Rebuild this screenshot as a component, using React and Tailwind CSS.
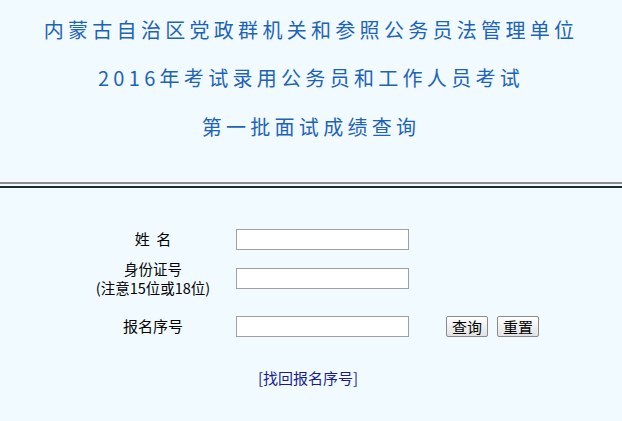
import React from 'react';

const cjk = { fontFamily: '"Noto Sans CJK SC", "Noto Sans", sans-serif' };

const App = () => {
  return (
    <div className="min-h-[421px] w-[622px] bg-[#f0faff]" style={cjk}>
      {/* Header */}
      <div className="flex h-[182px] flex-col items-center pt-[14px] text-[20px] leading-[32px] tracking-[4.3px] text-[#1f63b8]">
        <div className="h-[32px]">内蒙古自治区党政群机关和参照公务员法管理单位</div>
        <div className="mt-[16px] h-[32px]">2016年考试录用公务员和工作人员考试</div>
        <div className="mt-[17px] h-[32px]">第一批面试成绩查询</div>
      </div>
      <div className="h-[2px] bg-[#8c8c8c]" />
      <div className="h-[2px]" />
      <div className="h-[2px] bg-[#1c2a2a]" />

      {/* Form */}
      <div className="pl-[78px] pt-[40px] text-[15px] text-black">
        <div className="flex h-[22px] items-center">
          <div className="w-[150px] text-center">姓&nbsp;&nbsp;名</div>
          <input className="ml-[8px] h-[21px] w-[173px] border border-[#a0a0a0] bg-white outline-none" />
        </div>
        <div className="mt-[8px] flex h-[40px] items-center">
          <div className="w-[150px] text-center text-[14.5px] leading-[19px]">
            <div>身份证号</div>
            <div>(注意15位或18位)</div>
          </div>
          <input className="ml-[8px] h-[21px] w-[173px] border border-[#a0a0a0] bg-white outline-none" />
        </div>
        <div className="mt-[17px] flex h-[22px] items-center">
          <div className="w-[150px] text-center">报名序号</div>
          <input className="ml-[8px] h-[21px] w-[173px] border border-[#a0a0a0] bg-white outline-none" />
          <button className="ml-[37px] h-[21px] w-[42px] rounded-[2px] border border-[#8a8a8a] bg-gradient-to-b from-white to-[#e2e2e2] text-[15px] leading-[19px]">查询</button>
          <button className="ml-[9px] h-[21px] w-[42px] rounded-[2px] border border-[#8a8a8a] bg-gradient-to-b from-white to-[#e2e2e2] text-[15px] leading-[19px]">重置</button>
        </div>
      </div>

      <div className="mt-[30px] text-center text-[15px] text-[#1a1a99]">
        <a href="#" className="ml-[-6px]">[找回报名序号]</a>
      </div>
    </div>
  );
};

export default App;
